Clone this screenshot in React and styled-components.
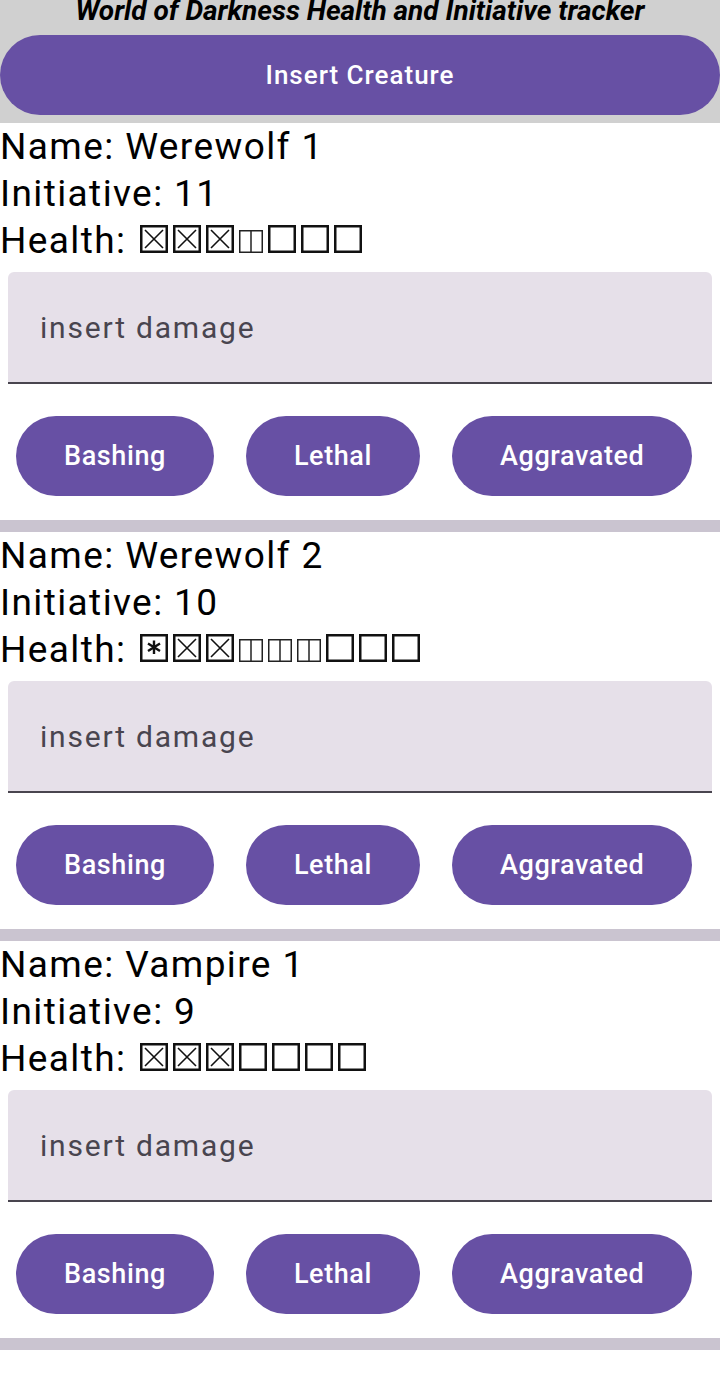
import React from 'react';
import styled, { createGlobalStyle } from 'styled-components';

const GlobalStyle = createGlobalStyle`
  html, body {
    margin: 0;
    padding: 0;
    background: #ffffff;
    font-family: Roboto, "Noto Sans", sans-serif;
  }
`;

const purple = '#6750a4';

const Page = styled.div`
  width: 720px;
  background: #ffffff;
`;

const Header = styled.header`
  background-color: #d0d0d0;
  padding-bottom: 8px;
  display: flex;
  flex-direction: column;
`;

const Title = styled.h1`
  margin: 0;
  height: 35px;
  line-height: 22px;
  font-size: 28px;
  font-weight: 700;
  font-style: italic;
  text-align: center;
  white-space: nowrap;
  color: #000;
`;

const WideButton = styled.button`
  height: 80px;
  width: 100%;
  border: none;
  border-radius: 40px;
  background: ${purple};
  color: #fff;
  font-family: Roboto, sans-serif;
  font-size: 26px;
  font-weight: 500;
  letter-spacing: 1px;
  cursor: pointer;
`;

const Card = styled.section`
  display: flex;
  flex-direction: column;
  border-bottom: 12px solid #cac4d0;
  padding-bottom: 24px;
`;

const Line = styled.div`
  font-size: 37px;
  letter-spacing: 1.4px;
  line-height: 47px;
  height: 47px;
  color: #000;
  white-space: nowrap;
`;

const Field = styled.input`
  margin: 8px 8px 0;
  height: 112px;
  box-sizing: border-box;
  border: none;
  border-bottom: 2px solid #49454f;
  border-radius: 6px 6px 0 0;
  background: #e6e0e9;
  padding: 0 32px;
  font-family: Roboto, sans-serif;
  font-size: 30px;
  letter-spacing: 1.8px;
  color: #1d1b20;
  outline: none;

  &::placeholder {
    color: #49454f;
  }
`;

const ButtonRow = styled.div`
  display: flex;
  gap: 32px;
  padding: 32px 16px 0;
`;

const DamageButton = styled.button`
  height: 80px;
  padding: 0 48px;
  border: none;
  border-radius: 40px;
  background: ${purple};
  color: #fff;
  font-family: Roboto, sans-serif;
  font-size: 27px;
  font-weight: 500;
  letter-spacing: 0.6px;
  cursor: pointer;
`;

const Track = styled.span`
  display: inline-flex;
  align-items: flex-end;
  gap: 5px;
  vertical-align: baseline;
  margin-left: 14px;
`;

const Box = styled.svg`
  display: block;
  flex: none;
`;

// health box glyphs
function HealthBox({ kind }) {
  if (kind === 'bashing') {
    return (
      <Box width="24" height="23" viewBox="0 0 24 23">
        <rect x="0.75" y="0.75" width="22.5" height="21.5" fill="none" stroke="#222" strokeWidth="1.5" />
        <line x1="12" y1="1" x2="12" y2="22" stroke="#222" strokeWidth="1.5" />
      </Box>
    );
  }
  return (
    <Box width="28" height="28" viewBox="0 0 28 28">
      <rect x="1.25" y="1.25" width="25.5" height="25.5" fill="none" stroke="#111" strokeWidth="2.5" />
      {kind === 'lethal' && (
        <path d="M5 5 L23 23 M23 5 L5 23" stroke="#111" strokeWidth="1.6" fill="none" />
      )}
      {kind === 'aggravated' && (
        <path
          d="M14 6.5 L14 20 M8 9.5 L20 17 M20 9.5 L8 17"
          stroke="#111"
          strokeWidth="2.4"
          fill="none"
        />
      )}
    </Box>
  );
}

const creatures = [
  {
    name: 'Werewolf 1',
    initiative: 11,
    health: ['lethal', 'lethal', 'lethal', 'bashing', 'empty', 'empty', 'empty'],
  },
  {
    name: 'Werewolf 2',
    initiative: 10,
    health: ['aggravated', 'lethal', 'lethal', 'bashing', 'bashing', 'bashing', 'empty', 'empty', 'empty'],
  },
  {
    name: 'Vampire 1',
    initiative: 9,
    health: ['lethal', 'lethal', 'lethal', 'empty', 'empty', 'empty', 'empty'],
  },
];

function CreatureCard({ creature }) {
  return (
    <Card>
      <Line>Name: {creature.name}</Line>
      <Line>Initiative: {creature.initiative}</Line>
      <Line>
        Health:
        <Track>
          {creature.health.map((h, i) => (
            <HealthBox key={i} kind={h} />
          ))}
        </Track>
      </Line>
      <Field placeholder="insert damage" />
      <ButtonRow>
        <DamageButton>Bashing</DamageButton>
        <DamageButton>Lethal</DamageButton>
        <DamageButton>Aggravated</DamageButton>
      </ButtonRow>
    </Card>
  );
}

export default function App() {
  return (
    <Page>
      <GlobalStyle />
      <Header>
        <Title>World of Darkness Health and Initiative tracker</Title>
        <WideButton>Insert Creature</WideButton>
      </Header>
      {creatures.map((c) => (
        <CreatureCard key={c.name} creature={c} />
      ))}
    </Page>
  );
}
